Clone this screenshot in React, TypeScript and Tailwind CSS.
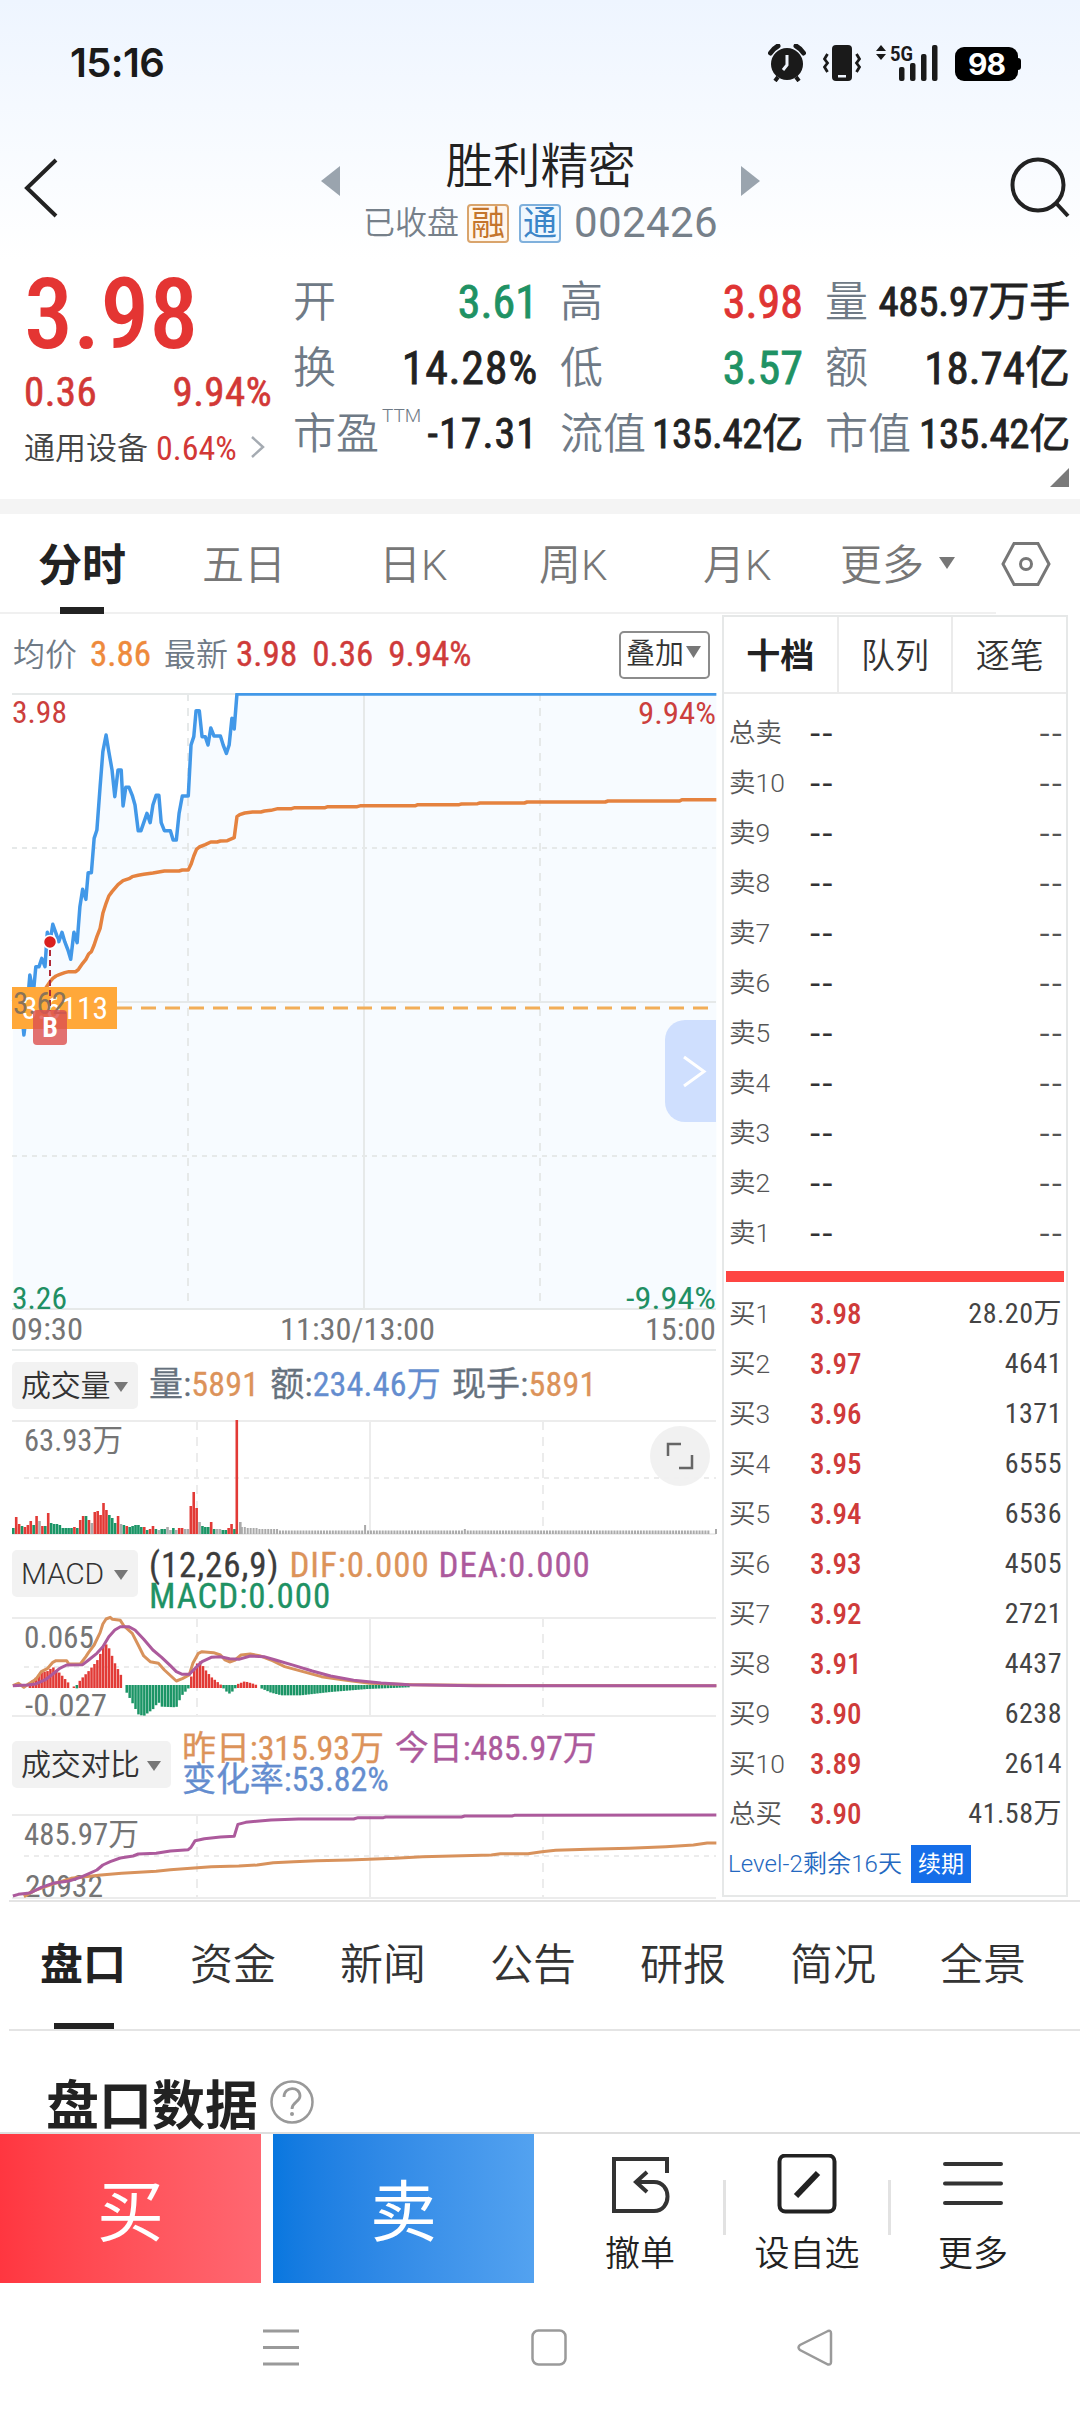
import type { ReactNode } from 'react';

const QUOTES = [
  { label: '开', value: '3.61', style: 'text-[46px] text-[#1f9264]' },
  { label: '高', value: '3.98', style: 'text-[46px] text-[#df3433]' },
  { label: '量', value: '485.97万手', style: 'text-[41px] tracking-[-0.3px] text-[#222]' },
  { label: '换', value: '14.28%', style: 'text-[46px] tracking-[0.7px] text-[#222]' },
  { label: '低', value: '3.57', style: 'text-[46px] text-[#1f9264]' },
  { label: '额', value: '18.74亿', style: 'text-[45px] text-[#222]' },
  { label: '市盈', sup: 'TTM', value: '-17.31', style: 'text-[42px] tracking-[1px] text-[#222]' },
  { label: '流值', value: '135.42亿', style: 'text-[41px] tracking-[-0.3px] text-[#222]' },
  { label: '市值', value: '135.42亿', style: 'text-[41px] tracking-[-0.3px] text-[#222]' },
];

const SELLS = ['总卖', '卖10', '卖9', '卖8', '卖7', '卖6', '卖5', '卖4', '卖3', '卖2', '卖1'];

const BUYS = [
  ['买1', '3.98', '28.20万'],
  ['买2', '3.97', '4641'],
  ['买3', '3.96', '1371'],
  ['买4', '3.95', '6555'],
  ['买5', '3.94', '6536'],
  ['买6', '3.93', '4505'],
  ['买7', '3.92', '2721'],
  ['买8', '3.91', '4437'],
  ['买9', '3.90', '6238'],
  ['买10', '3.89', '2614'],
  ['总买', '3.90', '41.58万'],
];

// 分时数据：横轴放大 1568/720，纵轴放大 3 倍
const PRICE_LINE =
  '28,965 40,950 47,990 52,1065 58,1000 65,885 70,920 74,920 78,860 85,860 91,835 98,860 103,757 109,785 115,733 122,760 128,785 135,757 141,785 148,810 154,838 161,757 168,788 174,680 180,628 187,658 192,578 199,578 205,475 211,450 218,320 224,215 231,165 237,215 244,270 250,350 257,270 264,270 268,378 274,322 281,322 288,346 294,375 301,452 307,452 320,400 327,428 333,375 340,346 346,346 351,428 358,452 371,452 377,480 384,480 390,400 397,348 410,348 416,195 422,170 427,92 434,92 440,170 447,170 453,195 459,144 466,168 480,168 486,195 493,220 499,195 505,115 510,147 516,42 1560,42';
const AVG_LINE =
  '60,960 90,945 103,917 109,905 115,895 122,888 129,884 141,878 150,875 165,875 171,868 180,850 187,838 193,822 199,815 205,795 211,770 218,745 224,700 231,670 237,648 244,635 257,614 268,602 281,596 288,590 301,586 313,583 333,579 358,573 390,573 397,570 410,570 416,553 422,528 428,508 434,501 447,494 459,486 473,486 480,483 495,482 510,473 516,410 522,404 533,399 550,396 568,396 576,393 590,391 605,386 635,386 642,383 708,383 714,380 778,380 786,377 905,377 910,374 1000,374 1005,372 1040,371 1045,369 1142,369 1148,366 1318,366 1324,363 1480,363 1485,359 1560,359';
const DIF_LINE =
  '28,257 40,250 52,262 62,252 78,238 90,215 104,205 115,187 122,182 145,182 150,192 175,192 187,170 193,157 205,135 218,98 224,72 231,57 240,52 245,58 262,61 270,78 288,100 301,135 313,168 327,185 345,190 358,210 384,243 397,236 412,225 420,190 432,160 440,155 465,158 480,165 490,180 500,186 512,180 525,165 545,162 565,167 590,180 620,200 660,215 700,230 750,240 806,250 900,254 1030,256 1560,257';
const DEA_LINE =
  '28,257 60,255 78,252 98,240 115,222 130,205 145,195 180,194 193,180 211,160 224,140 237,110 250,90 262,80 280,80 294,90 313,118 333,150 352,172 371,197 384,215 397,223 412,223 425,205 440,185 460,172 480,170 500,176 520,178 545,168 575,170 600,180 640,196 680,213 720,228 770,241 830,249 890,254 1035,257 1560,257';
const TODAY_LINE =
  '28,888 40,883 60,880 70,876 90,862 115,850 150,843 175,832 190,823 211,810 224,795 240,785 262,774 290,768 301,762 340,760 371,753 410,749 416,742 425,722 445,716 480,711 510,709 518,673 535,667 565,663 590,660 650,657 770,657 780,653 835,653 840,651 1005,651 1012,648 1115,648 1120,646 1560,645';
const YESTERDAY_LINE =
  '52,890 75,872 95,862 115,852 155,835 185,830 220,825 265,820 340,814 371,809 430,803 460,800 520,798 560,795 595,788 640,785 690,782 760,780 860,775 920,770 1070,765 1090,761 1150,761 1180,755 1210,751 1280,748 1370,745 1450,740 1510,735 1540,729 1560,729';

// 成交量柱：高度 + 颜色（r 红 g 绿 y 灰）
const VOLUMES =
  '6g 17r 10r 8g 7r 9r 13r 9g 18r 13y 8r 8g 21r 11g 10g 10g 9g 6g 6g 6g 6g 7r 6g 14r 18r 18g 14r 11y 22r 23r 19r 31r 24r 19g 16g 11g 18r 10y 9g 8r 7g 8g 9g 9g 7g 7r 4g 5r 8r 5g 4y 5g 5g 7y 4y 6g 4y 6r 6r 5y 5y 28r 42r 26r 12y 8g 7g 7g 12r 5g 5y 5y 4g 4g 6r 10r 5g'.split(' ');
const BAR_COLORS: Record<string, string> = { r: '#e23a36', g: '#1b9566', y: '#aaaaaa' };

const MACD_SHAPE: [number, number][] = [
  [62, 0], [66, 14], [78, 28], [90, 44], [104, 48], [115, 60], [130, 42], [148, 14], [152, 0], [160, 3], [167, -8], [174, 20], [193, 48], [211, 78], [218, 98], [224, 120], [231, 128], [237, 118], [250, 72], [264, 34], [269, 0], [275, -18], [288, -50], [301, -85], [313, -90], [333, -70], [345, -48], [352, -62], [384, -64], [395, -30], [411, -6], [416, 30], [428, 68], [434, 80], [447, 52], [460, 30], [480, 8], [486, -6], [498, -24], [511, -12], [516, 8], [533, 17], [556, 8], [563, 0], [567, -6], [590, -20], [613, -28], [655, -28], [720, -18], [800, -9], [890, -4],
];

function macdAt(x: number) {
  for (let i = 1; i < MACD_SHAPE.length; i++) {
    const [x0, y0] = MACD_SHAPE[i - 1];
    const [x1, y1] = MACD_SHAPE[i];
    if (x >= x0 && x <= x1) return y0 + ((y1 - y0) * (x - x0)) / (x1 - x0);
  }
  return 0;
}

function Line({ points, color, dy, width = 3.5 }: { points: string; color: string; dy: number; width?: number }) {
  return (
    <g transform={`translate(0 ${dy}) scale(0.4592 0.33333)`}>
      <polyline points={points} fill="none" stroke={color} strokeWidth={width} strokeLinejoin="round" vectorEffect="non-scaling-stroke" />
    </g>
  );
}

function Label({ x, y, w, size = 31, color = '#757575', children }: { x: number; y: number; w: number; size?: number; color?: string; children: string }) {
  return (
    <text x={x} y={y} fontSize={size} fill={color} textLength={w} lengthAdjust="spacingAndGlyphs">
      {children}
    </text>
  );
}

function SubGrid({ h, mid }: { h: number; mid: number }) {
  return (
    <g stroke="#ececec" strokeWidth="2">
      <path d={`M12 1H716M12 ${h - 1}H716M370 1V${h}`} />
      <path d={`M24 ${mid}H716`} strokeDasharray="5 5" />
      <path d={`M197 1V${h}M543 1V${h}`} strokeDasharray="9 7" />
    </g>
  );
}

function Chip({ wide, children }: { wide?: boolean; children: string }) {
  return (
    <div className={`${wide ? 'w-[159px]' : 'w-[126px]'} flex h-[47px] shrink-0 items-center justify-between rounded-[5px] bg-[#f2f2f2] pr-[10px] pl-[9px] font-['Roboto','Noto_Sans_CJK_SC'] text-[30px] font-[350] tracking-[-0.3px] text-[#333]`}>
      {children}
      <svg className="mt-[3px]" width="14" height="10"><path d="M0 0H14L7 10Z" fill="#777" /></svg>
    </div>
  );
}

function StatusBar() {
  return (
    <div className="flex h-[124px] items-center justify-between pr-[59px] pl-[70px] text-[#1a1a1a]">
      <span className="mt-[2px] font-['Inter'] text-[40px] font-semibold tracking-[-0.6px]">15:16</span>
      <div className="flex items-center">
        <svg className="mt-[2px]" width="38" height="38" viewBox="0 0 38 38">
          <circle cx="19" cy="20" r="16" fill="#1a1a1a" />
          <path d="M2.500 9A20 20 0 0 1 10 2M28 2a20 20 0 0 1 7.500 7" stroke="#1a1a1a" strokeWidth="5" fill="none" strokeLinecap="round" />
          <path d="M10 33l-3 4M28 33l3 4" stroke="#1a1a1a" strokeWidth="4" />
          <path d="M19 11v10l-4 5" stroke="#eff5fe" strokeWidth="3" fill="none" />
        </svg>
        <svg className="mt-[2px] ml-[17px]" width="38" height="38" viewBox="0 0 38 38">
          <rect x="9" y="1" width="20" height="36" rx="4" fill="#1a1a1a" />
          <rect x="15" y="31" width="8" height="2.500" fill="#eff5fe" />
          <path d="M4.500 10l-3 5 3 4-3 4 3 5M33.500 10l3 5-3 4 3 4-3 5" stroke="#1a1a1a" strokeWidth="2.800" fill="none" />
        </svg>
        <svg className="mt-[2px] ml-[14px] overflow-visible" width="66" height="38" viewBox="0 0 66 38" fill="#1a1a1a">
          <path d="M1 7L6 1l5 6zM1 10h10l-5 6z" />
          <text x="15" y="16.500" fontSize="20" fontWeight="700" textLength="23" lengthAdjust="spacingAndGlyphs" fontFamily="Roboto">5G</text>
          <rect x="24" y="23" width="5.500" height="14" rx="2" />
          <rect x="35" y="19" width="5.500" height="18" rx="2" />
          <rect x="46" y="10" width="5.500" height="27" rx="2" />
          <rect x="57" y="1" width="5.500" height="36" rx="2" />
        </svg>
        <div className="mt-[3px] ml-[14px] flex h-[34px] w-[63px] items-center justify-center rounded-[9px] bg-black font-['Inter'] text-[30px] font-bold tracking-[-1px] text-white">98</div>
        <div className="mt-[3px] h-[12px] w-[3px] rounded-r-[3px] bg-black" />
      </div>
    </div>
  );
}

function TitleBar() {
  return (
    <div className="flex h-[136px] items-start justify-between px-[16px]">
      <svg className="mt-[32px]" width="44" height="64" viewBox="0 0 44 64">
        <path d="M40 4L11 32l29 28" fill="none" stroke="#222" strokeWidth="4" />
      </svg>
      <div className="mt-[16px] ml-[12px] flex w-[440px] justify-between">
        <svg className="mt-[26px]" width="20" height="30"><path d="M19 0V30L0 15Z" fill="#9aa4ae" /></svg>
        <div className="flex flex-col items-center">
          <div className="text-[47.500px] leading-[54px] font-[350] text-[#222]">胜利精密</div>
          <div className="flex h-[58px] items-center text-[32px] text-[#76808a]">
            <span className="font-[350]">已收盘</span>
            <span className="ml-[8px] flex h-[39px] w-[42px] items-center justify-center rounded-[4px] border-2 border-[#d9a46c] bg-[#fff6ec] text-[34px] text-[#c4752c]">融</span>
            <span className="ml-[10px] flex h-[39px] w-[42px] items-center justify-center rounded-[4px] border-2 border-[#7fb0dc] bg-[#eff7fe] text-[34px] text-[#3b85c8]">通</span>
            <span className="ml-[13px] font-['Roboto'] text-[42px] tracking-[0.4px]">002426</span>
          </div>
        </div>
        <svg className="mt-[26px]" width="20" height="30"><path d="M1 0V30L20 15Z" fill="#9aa4ae" /></svg>
      </div>
      <svg className="mt-[31px] mr-[-9px]" width="64" height="64" viewBox="0 0 64 64">
        <circle cx="29" cy="30" r="25.500" fill="none" stroke="#222" strokeWidth="4" />
        <path d="M47 48l12 13" stroke="#222" strokeWidth="4" />
      </svg>
    </div>
  );
}

function QuotePanel() {
  return (
    <div className="flex h-[239px] pl-[24px]">
      <div className="w-[269px]">
        <div className="mt-[10px] h-[90px] text-[98px] leading-[90px] font-medium text-[#e43533]">3.98</div>
        <div className="mt-[14px] flex h-[36px] w-[248px] items-center justify-between text-[41px] tracking-[0.4px] text-[#d23836] [-webkit-text-stroke:0.6px]">
          <span>0.36</span>
          <span>9.94%</span>
        </div>
        <div className="mt-[20px] flex h-[36px] items-center text-[31px] text-[#444]">
          <span className="font-[350]">通用设备</span>
          <span className="ml-[8px] text-[34px] text-[#d23836]">0.64%</span>
          <svg className="mt-[-3px] ml-[14px]" width="14" height="22"><path d="M1 1L12 11L1 21" fill="none" stroke="#a5abb2" strokeWidth="2.500" /></svg>
        </div>
      </div>
      <div className="relative grid w-[777px] grid-cols-[245px_243px_245px] grid-rows-[66px_66px_66px] gap-x-[22px] pt-[9px]">
        {QUOTES.map((q, i) => (
          <div key={i} className="flex items-center justify-between whitespace-nowrap">
            <span className="flex items-center text-[43px] font-[350] text-[#6f7a86]">
              {q.label}
              {q.sup && <sup className="mt-[-18px] ml-[3px] font-['Roboto'] text-[19px]">{q.sup}</sup>}
            </span>
            <span className={`${q.style} [-webkit-text-stroke:0.8px]`}>{q.value}</span>
          </div>
        ))}
        <svg className="absolute right-[1px] bottom-[12px]" width="19" height="19"><path d="M19 0V19H0Z" fill="#7a7a7a" /></svg>
      </div>
    </div>
  );
}

function PeriodTabs() {
  return (
    <div className="flex h-[100px] text-[42px] font-[350] text-[#777]">
      <div className="flex w-[996px] items-center border-b-2 border-[#f0f0f0] pt-[6px]">
        <div className="relative ml-[38px] flex h-[92px] w-[164px] items-center text-[44px] font-bold text-[#222]">
          分时
          <div className="absolute bottom-[-2px] left-[22px] h-[7px] w-[44px] bg-[#222]" />
        </div>
        <span className="w-[177px]">五日</span>
        <span className="w-[160px] font-['Roboto','Noto_Sans_CJK_SC']">日K</span>
        <span className="w-[164px] font-['Roboto','Noto_Sans_CJK_SC']">周K</span>
        <span className="w-[137px] font-['Roboto','Noto_Sans_CJK_SC']">月K</span>
        <span>更多</span>
        <svg className="mt-[-6px] ml-[15px]" width="16" height="12"><path d="M0 0H16L8 12Z" fill="#777" /></svg>
      </div>
      <svg className="mt-[27px] ml-[5px]" width="50" height="46" viewBox="0 0 50 46" fill="none" stroke="#777" strokeWidth="3">
        <path d="M13 2.500H37L48 23L37 43.500H13L2 23Z" />
        <circle cx="25" cy="23" r="5.500" />
      </svg>
    </div>
  );
}

function PriceChart() {
  return (
    <svg className="block" width="722" height="658" viewBox="0 0 722 658">
      <g transform="translate(0 -13) scale(0.4592 0.33333)">
        <polygon points={`28,1887 ${PRICE_LINE} 1560,1887`} fill="#f7fbff" />
      </g>
      <g stroke="#e6e9e9" strokeWidth="2">
        <path d="M12 1H716M12 309H716M12 616H716M364 0V616" />
        <path d="M12 155H716M12 463H716" strokeDasharray="5 5" />
        <path d="M188 0V616M540 0V616" strokeDasharray="8 7" />
        <path d="M12 657H716" />
      </g>
      <Line points={AVG_LINE} color="#e5823f" dy={-13} />
      <Line points={PRICE_LINE} color="#4298e8" dy={-13} />
      <path d="M117 315H716" stroke="#f2ad57" strokeWidth="3" strokeDasharray="15 9" />
      <rect x="12" y="294" width="105" height="42" fill="#ffa83a" />
      <Label x={22} y={326} w={86} color="#fff">3.6113</Label>
      <path d="M50 257V318" stroke="#b02a37" strokeWidth="2" strokeDasharray="6 4" />
      <Label x={13} y={321} w={54} color="#8a7358">3.62</Label>
      <rect x="33" y="317" width="34" height="35" rx="4" fill="#dd5250" fillOpacity="0.82" />
      <text x="50" y="344" fontSize="28" fontWeight="700" fill="#fff" textAnchor="middle">B</text>
      <circle cx="50" cy="249" r="6.500" fill="#d9201f" stroke="#fff" strokeWidth="1.500" />
      <Label x={12} y={30} w={55} color="#cc3f3d">3.98</Label>
      <Label x={638} y={31} w={78} color="#cc3f3d">9.94%</Label>
      <Label x={12} y={616} w={55} color="#1f8f64">3.26</Label>
      <Label x={626} y={616} w={90} color="#1f8f64">-9.94%</Label>
      <Label x={11} y={647} w={72}>09:30</Label>
      <Label x={280} y={647} w={155}>11:30/13:00</Label>
      <Label x={645} y={647} w={71}>15:00</Label>
      <path d="M716 327H685a20 20 0 0 0-20 20v62a20 20 0 0 0 20 20H716Z" fill="#cfdffe" />
      <path d="M684 364l20 14.500-20 14.500" fill="none" stroke="#fff" strokeWidth="3" />
    </svg>
  );
}

function VolumeChart() {
  const tail: ReactNode[] = [];
  for (let i = 78; i < 238; i++) {
    const h = i < 80 ? 7 : i < 84 ? 6 : i < 91 ? 5 : i === 120 ? 9 : i === 154 ? 5 : 3.5;
    tail.push(<rect key={i} x={12 + i * 2.934} y={114 - h} width="2" height={h} fill="#aaa" />);
  }
  return (
    <svg className="block" width="722" height="116" viewBox="0 0 722 116">
      <SubGrid h={115} mid={58} />
      {VOLUMES.map((v, i) => {
        const h = parseInt(v, 10);
        return <rect key={i} x={12 + i * 2.91} y={114 - h} width="2.600" height={h} fill={BAR_COLORS[v.slice(-1)]} />;
      })}
      <rect x="235.500" y="0" width="2.600" height="114" fill="#e23a36" />
      <rect x="239" y="102" width="2.600" height="12" fill="#aaa" />
      {tail}
      <rect x="715" y="109" width="2" height="5" fill="#aaa" />
      <Label x={24} y={31} w={99}>63.93万</Label>
      <circle cx="680" cy="36" r="30" fill="#f0f0f0" fillOpacity="0.95" />
      <path d="M668 36V24H681M692 35V48H679" fill="none" stroke="#666" strokeWidth="2.500" />
    </svg>
  );
}

function MacdChart() {
  const bars: ReactNode[] = [];
  for (let x = 65; x < 890; x += 6.39) {
    const v = macdAt(x) / 3;
    if (Math.abs(v) < 0.5) continue;
    bars.push(
      <rect key={x} x={x * 0.4592 - 1.2} y={v > 0 ? 70 - v : 68} width="2.500" height={Math.abs(v) + 1} fill={v > 0 ? '#e23a36' : '#1b9566'} />,
    );
  }
  return (
    <svg className="block overflow-visible" width="722" height="101" viewBox="0 0 722 101">
      <SubGrid h={100} mid={50} />
      {bars}
      <Line points={DIF_LINE} color="#d8925c" dy={-17} width={3} />
      <Line points={DEA_LINE} color="#ac5a9c" dy={-17} width={3} />
      <Label x={24} y={31} w={70}>0.065</Label>
      <Label x={25} y={99} w={82}>-0.027</Label>
    </svg>
  );
}

function CompareChart() {
  return (
    <svg className="block overflow-visible" width="722" height="85" viewBox="0 0 722 85">
      <SubGrid h={85} mid={42} />
      <Label x={24} y={31} w={115}>485.97万</Label>
      <Label x={25} y={83} w={78}>20932</Label>
      <Line points={YESTERDAY_LINE} color="#d8925c" dy={-214} width={3} />
      <Line points={TODAY_LINE} color="#ac5a9c" dy={-214} width={3} />
    </svg>
  );
}

function ChartColumn() {
  return (
    <div className="w-[722px]">
      <div className="flex h-[79px] items-center pt-[2px] pl-[13px] text-[35px] [-webkit-text-stroke:0.4px]">
        <span className="text-[32px] font-[350] text-[#6f7a86] [-webkit-text-stroke:0px]">均价</span>
        <span className="ml-[13px] text-[#ee8a3c]">3.86</span>
        <span className="ml-[13px] text-[32px] font-[350] text-[#6f7a86] [-webkit-text-stroke:0px]">最新</span>
        <span className="ml-[8px] text-[#cf3b3a]">3.98</span>
        <span className="ml-[15px] text-[#cf3b3a]">0.36</span>
        <span className="ml-[15px] text-[#cf3b3a]">9.94%</span>
        <div className="mr-[12px] ml-auto flex h-[48px] w-[91px] items-center rounded-[5px] border-2 border-[#8c8c8c] pl-[5px] text-[29px] font-[350] text-[#333] [-webkit-text-stroke:0px]">
          叠加
          <svg className="mt-[-6px] ml-[2px]" width="15" height="12"><path d="M0 0H15L7.500 12Z" fill="#777" /></svg>
        </div>
      </div>
      <PriceChart />
      <div className="flex h-[69px] items-center pl-[12px] text-[34px]">
        <Chip>成交量</Chip>
        <div className="mt-[-3px] ml-[11px] tracking-[0.2px] whitespace-nowrap text-[#66717d] [-webkit-text-stroke:0.3px]">
          量:<span className="mr-[11px] text-[#dc935a]">5891</span>
          额:<span className="mr-[11px] text-[#648dcf]">234.46万</span>
          现手:<span className="text-[#dc935a]">5891</span>
        </div>
      </div>
      <VolumeChart />
      <div className="flex h-[81px] items-start pt-[14px] pl-[12px]">
        <Chip>MACD</Chip>
        <div className="ml-[11px] text-[35px] leading-[31px] tracking-[0.9px] whitespace-nowrap [-webkit-text-stroke:0.3px]">
          <span className="mr-[10px] text-[#3c3c3c]">(12,26,9)</span>
          <span className="mr-[9px] text-[#dc935a]">DIF:0.000</span>
          <span className="text-[#ac5a9c]">DEA:0.000</span>
          <div className="text-[#1f9264]">MACD:0.000</div>
        </div>
      </div>
      <MacdChart />
      <div className="flex h-[96px] items-start pt-[15px] pl-[12px]">
        <div className="pt-[8px]"><Chip wide>成交对比</Chip></div>
        <div className="ml-[11px] text-[34px] leading-[31px] tracking-[-0.1px] whitespace-nowrap [-webkit-text-stroke:0.3px]">
          <span className="mr-[11px] text-[#dc935a]">昨日:315.93万</span>
          <span className="text-[#ac5a9c]">今日:485.97万</span>
          <div className="text-[#648dcf]">变化率:53.82%</div>
        </div>
      </div>
      <CompareChart />
    </div>
  );
}

function OrderBook() {
  return (
    <div className="mt-px h-[1282px] w-[346px] border-2 border-[#e6e8e8]">
      <div className="flex h-[77px] border-b-2 border-[#ebebeb] text-[34px] leading-[78px] font-[350] text-[#333]">
        <div className="flex-1 border-r-2 border-[#ebebeb] text-center font-bold text-[#222]">十档</div>
        <div className="flex-1 border-r-2 border-[#ebebeb] text-center">队列</div>
        <div className="flex-1 text-center">逐笔</div>
      </div>
      <div className="mt-[14px]">
        {SELLS.map((label) => (
          <div key={label} className="flex h-[50px] items-center pr-[3px] pl-[5px] font-['Roboto','Noto_Sans_CJK_SC'] text-[26.500px] font-[350] text-[#555]">
            <span className="w-[80px] whitespace-nowrap">{label}</span>
            <span className="font-['Inter'] font-medium text-[#333]">--</span>
            <span className="ml-auto font-['Inter'] font-normal text-[#555]">--</span>
          </div>
        ))}
      </div>
      <div className="mx-[2px] mt-[13px] h-[11px] bg-[#fe4542]" />
      <div className="mt-[7px]">
        {BUYS.map(([label, price, volume]) => (
          <div key={label} className="flex h-[50px] items-center pr-[4px] pl-[5px] text-[26.500px] text-[#555]">
            <span className="w-[81px] font-['Roboto','Noto_Sans_CJK_SC'] font-[350]">{label}</span>
            <span className="text-[29px] font-medium text-[#cf3b3a]">{price}</span>
            <span className="ml-auto text-[28px] tracking-[0.5px] text-[#444]">{volume}</span>
          </div>
        ))}
      </div>
      <div className="flex h-[50px] items-center pl-[4px] text-[24px] text-[#2468c0]">
        <span className="w-[176px] font-['Roboto','Noto_Sans_CJK_SC'] font-[350] tracking-[0.1px] whitespace-nowrap">Level-2剩余16天</span>
        <span className="ml-[7px] flex h-[38px] w-[60px] items-center justify-center bg-[#156ee9] text-[23px] text-white">续期</span>
      </div>
    </div>
  );
}

function InfoTabs() {
  return (
    <div className="ml-[9px] flex h-[131px] items-center border-y-2 border-[#e4e4e4] pl-[31px] text-[43px] font-[350] text-[#333]">
      <div className="relative flex h-full w-[150px] shrink-0 items-center font-bold text-[#222]">
        盘口
        <div className="absolute bottom-0 left-[14px] h-[6px] w-[60px] bg-[#222]" />
      </div>
      {['资金', '新闻', '公告', '研报', '简况', '全景'].map((t) => (
        <div key={t} className="w-[150px] shrink-0">{t}</div>
      ))}
    </div>
  );
}

function BottomBar() {
  return (
    <div className="flex h-[151px] border-t-2 border-[#dedede] text-[35px] font-[350] text-[#222]">
      <div className="flex w-[261px] items-center justify-center bg-linear-to-r from-[#ff3640] to-[#ff6771] pt-[9px] text-[67px] font-normal text-white">买</div>
      <div className="ml-[12px] flex w-[261px] items-center justify-center bg-linear-to-r from-[#0877df] to-[#53a2f0] pt-[9px] text-[67px] font-normal text-white">卖</div>
      <div className="flex w-[189px] flex-col items-center pt-[20px] pl-[23px]">
        <svg width="60" height="60" viewBox="0 0 60 60" fill="none" stroke="#333" strokeWidth="4">
          <path d="M57 19V5H4V57H44C62 57 62 28 44 28H26" />
          <path d="M37 18L26 28l11 10" />
        </svg>
        <div className="mt-[21px] leading-[40px]">撤单</div>
      </div>
      <div className="mt-[46px] h-[55px] w-[3px] bg-[#e2e2e2]" />
      <div className="flex w-[162px] flex-col items-center pt-[20px]">
        <svg width="60" height="60" viewBox="0 0 60 60" fill="none" stroke="#222">
          <rect x="2.500" y="1.500" width="55" height="56" rx="6" strokeWidth="4" />
          <path d="M19 42L41 19" strokeWidth="6" />
        </svg>
        <div className="mt-[21px] leading-[40px]">设自选</div>
      </div>
      <div className="mt-[46px] h-[55px] w-[3px] bg-[#e2e2e2]" />
      <div className="flex w-[164px] flex-col items-center pt-[20px]">
        <svg width="60" height="60" viewBox="0 0 60 60">
          <path d="M2 10H58M2 29.500H58M2 49H58" stroke="#333" strokeWidth="4" strokeLinecap="round" />
        </svg>
        <div className="mt-[21px] leading-[40px]">更多</div>
      </div>
    </div>
  );
}

export default function App() {
  return (
    <div className="h-[2414px] w-[1080px] overflow-hidden bg-white font-['Roboto_Condensed','Noto_Sans_CJK_SC',sans-serif] leading-none">
      <div className="bg-linear-to-b from-[#eef5ff] to-white">
        <StatusBar />
        <TitleBar />
      </div>
      <QuotePanel />
      <div className="h-[15px] bg-[#f4f4f4]" />
      <PeriodTabs />
      <div className="flex h-[1286px]">
        <ChartColumn />
        <OrderBook />
      </div>
      <InfoTabs />
      <div className="flex h-[101px] items-end pl-[46px]">
        <span className="mb-[-4px] h-[58px] text-[53px] leading-[58px] font-bold text-[#222]">盘口数据</span>
        <svg className="mb-[8px] ml-[12px]" width="44" height="44" viewBox="0 0 44 44">
          <circle cx="22" cy="22" r="20.500" fill="none" stroke="#999" strokeWidth="2.500" />
          <path d="M14 17c0-11 16-11 16-1 0 6-8 6-8 13" fill="none" stroke="#999" strokeWidth="2.800" />
          <circle cx="22" cy="34" r="2" fill="#999" />
        </svg>
      </div>
      <BottomBar />
      <div className="flex pt-[45px] pl-[263px]">
        <svg width="36" height="40" viewBox="0 0 36 40"><path d="M0 3H36M0 19.500H36M0 36H36" stroke="#9a9a9a" strokeWidth="3" /></svg>
        <svg className="ml-[232px]" width="36" height="40" viewBox="0 0 36 40"><rect x="1.500" y="2.500" width="33" height="34" rx="6" fill="none" stroke="#9a9a9a" strokeWidth="2.500" /></svg>
        <svg className="ml-[230px]" width="36" height="40" viewBox="0 0 36 40"><path d="M31 3L3 17Q0 19.500 3 22L31 36.500Q34 37 34 34V5.500Q34 2 31 3Z" fill="none" stroke="#9a9a9a" strokeWidth="2.500" /></svg>
      </div>
    </div>
  );
}
